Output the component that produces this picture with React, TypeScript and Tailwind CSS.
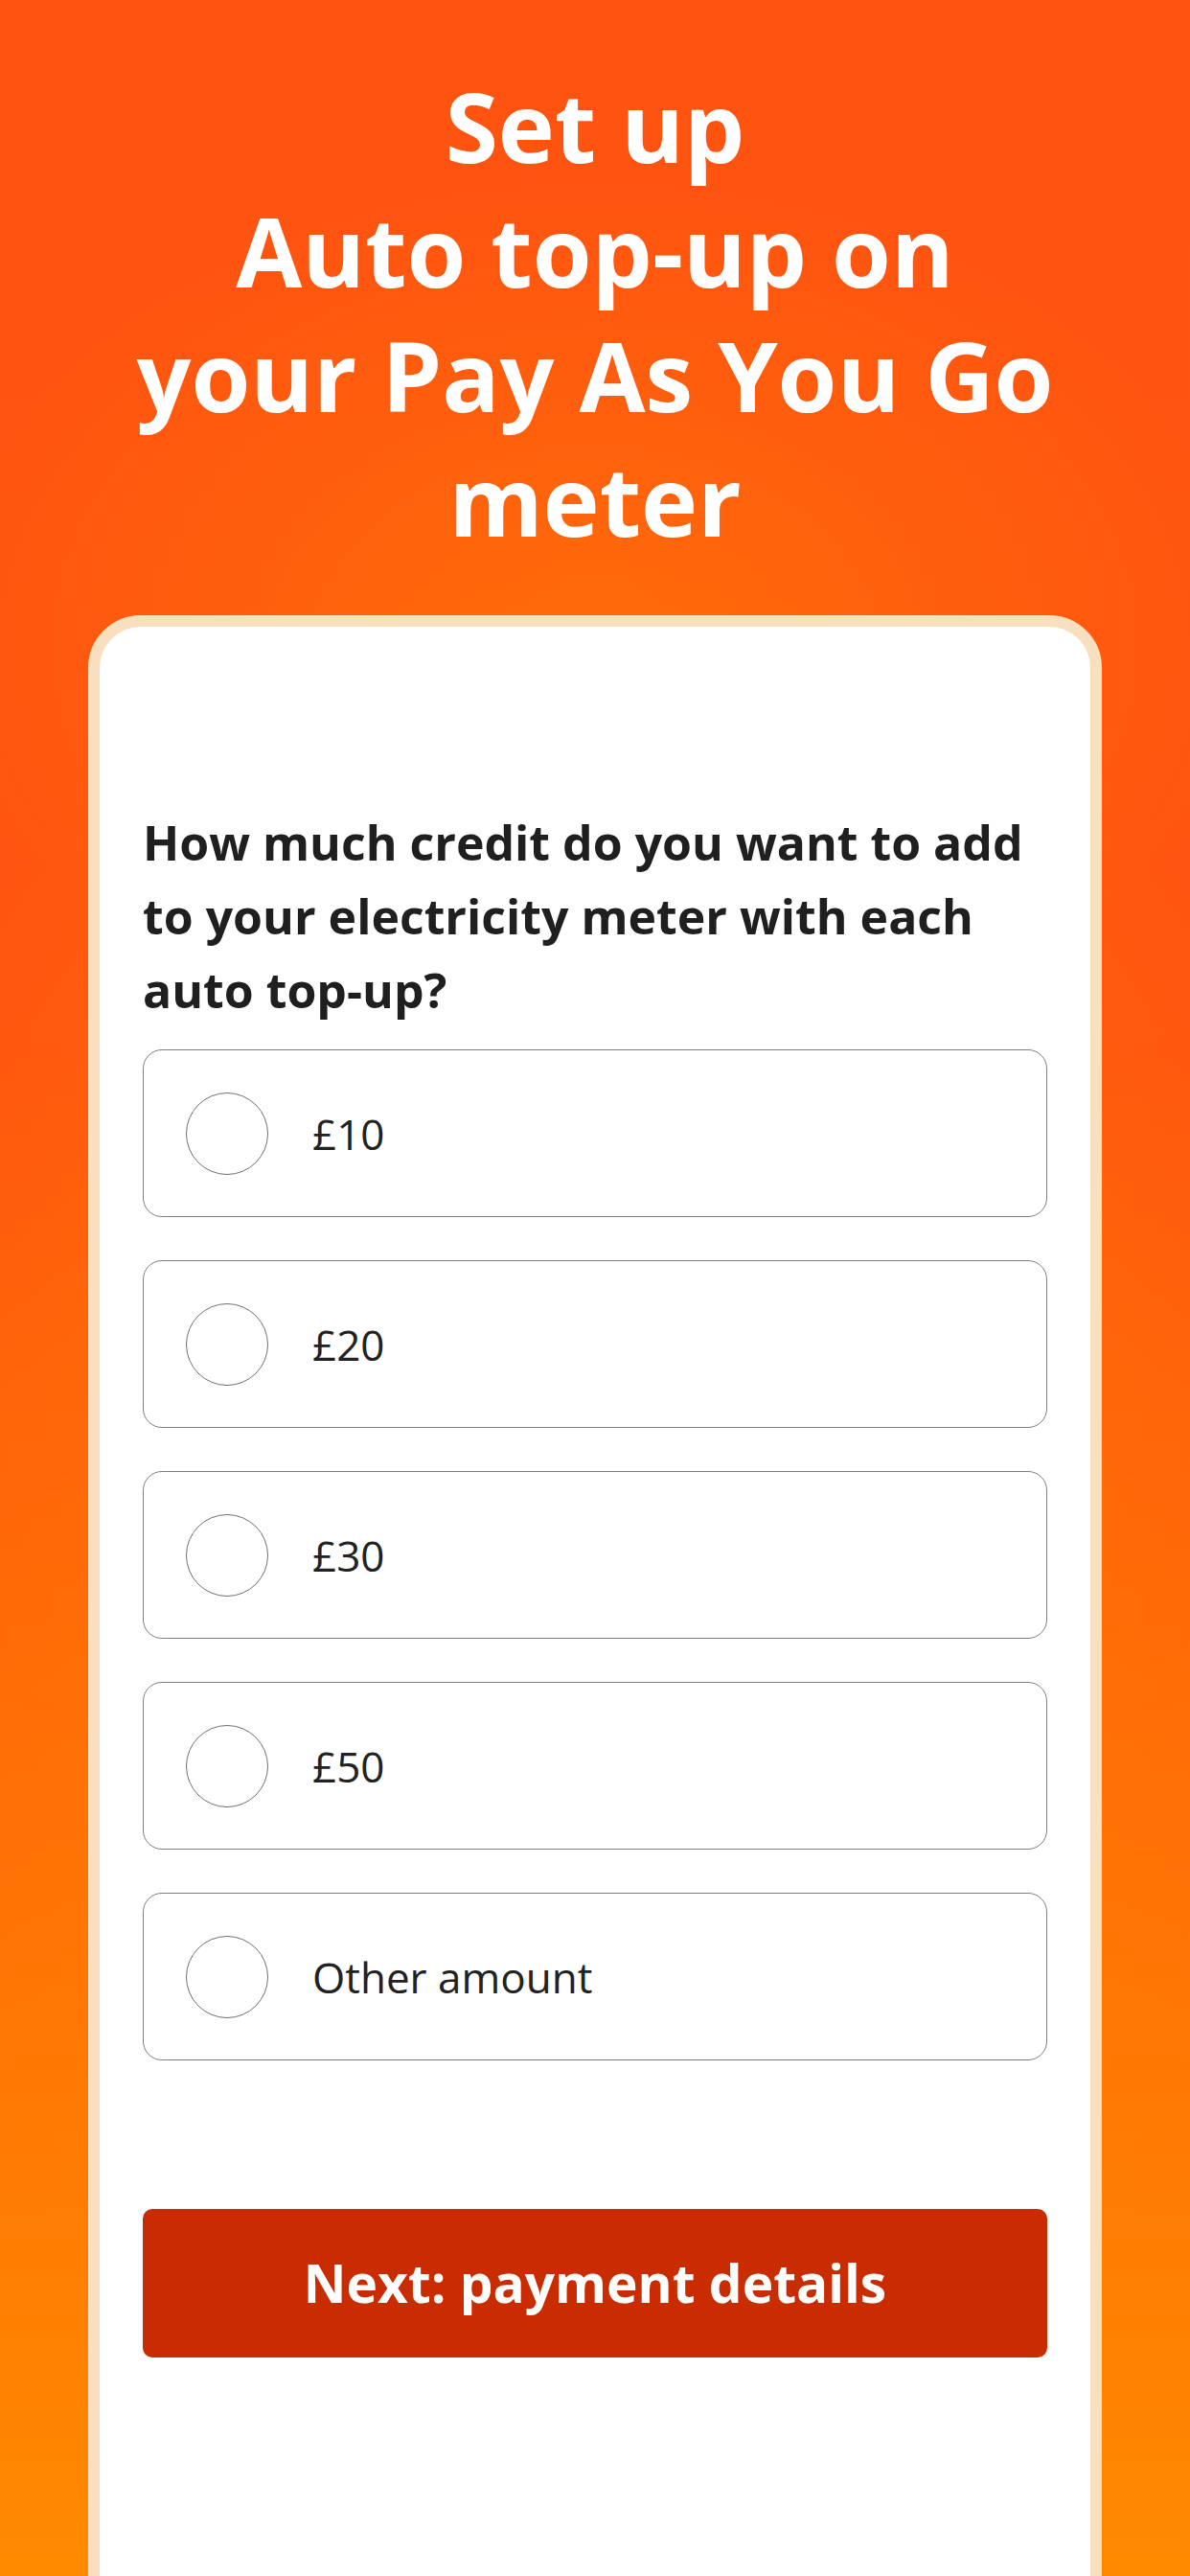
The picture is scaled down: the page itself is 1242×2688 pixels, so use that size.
const amounts = ["£10", "£20", "£30", "£50", "Other amount"];

function AmountOption({ label }: { label: string }) {
  return (
    <label className="flex h-[175px] items-center rounded-[20px] border border-[#7e7e7e] bg-white pl-[44px]">
      <span className="h-[86px] w-[86px] shrink-0 rounded-full border border-[#707070]" />
      <span className="ml-[46px] text-[44px] leading-none text-[#222]">{label}</span>
    </label>
  );
}

export default function App() {
  return (
    <div className="flex h-[2688px] w-[1242px] flex-col items-center overflow-hidden bg-[radial-gradient(ellipse_55%_18%_at_50%_25%,rgba(255,125,5,0.55)_0%,transparent_100%),radial-gradient(ellipse_65%_40%_at_50%_60%,rgba(255,135,0,0.5)_0%,transparent_100%),linear-gradient(to_bottom,#ff5410_0%,#ff5510_40%,#ff6608_62%,#ff8a00_100%)] font-['Open_Sans','Noto_Sans',sans-serif]">
      <h1 className="mt-[66px] text-center text-[100px] font-bold leading-[130px] text-white">
        Set up
        <br />
        Auto top-up on
        <br />
        your Pay As You Go
        <br />
        meter
      </h1>

      <main className="mt-[56px] h-[2200px] w-[1058px] shrink-0 rounded-t-[55px] border-[12px] border-[#f8dfbd] bg-white px-[45px] pt-[187px]">
        <h2 className="text-[50px] font-bold leading-[77px] text-[#1f1f1f]">
          How much credit do you want to add
          <br />
          to your electricity meter with each
          <br />
          auto top-up?
        </h2>

        <div className="mt-[23px] flex flex-col gap-[45px]">
          {amounts.map((a) => (
            <AmountOption key={a} label={a} />
          ))}
        </div>

        <button className="mt-[155px] flex h-[155px] w-full items-center justify-center rounded-[10px] bg-[#c82c00] text-[55px] font-bold text-white">
          Next: payment details
        </button>
      </main>
    </div>
  );
}
